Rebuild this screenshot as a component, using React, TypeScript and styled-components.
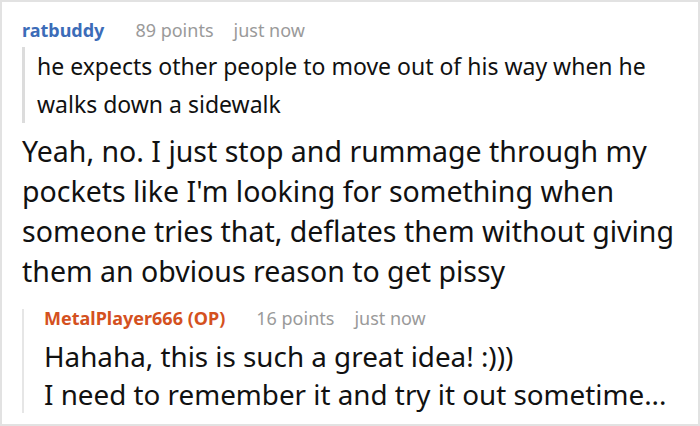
import React from 'react';
import styled, { createGlobalStyle } from 'styled-components';

const GlobalStyle = createGlobalStyle`
  html, body {
    margin: 0;
    padding: 0;
    background: #fff;
  }
  body {
    font-family: "Noto Sans", "Open Sans", sans-serif;
    color: #111;
  }
`;

const Frame = styled.div`
  box-sizing: border-box;
  width: 700px;
  height: 426px;
  border: 2px solid #e2e2e2;
  padding: 15px 20px 0 20px;
  overflow: hidden;
`;

const MetaRow = styled.div<{ $nested?: boolean }>`
  display: flex;
  align-items: baseline;
  font-size: 18px;
  line-height: ${p => (p.$nested ? '18px' : '26px')};
  margin-top: ${p => (p.$nested ? '-8px' : '0')};
`;

const Author = styled.span<{ $op?: boolean }>`
  font-weight: 700;
  color: ${p => (p.$op ? '#d4511e' : '#3c6cb8')};
  margin-right: 31px;
`;

const Points = styled.span`
  color: #9a9a9a;
  margin-right: 20px;
`;

const Time = styled.span`
  color: #9a9a9a;
`;

const Quote = styled.blockquote`
  margin: 4px 0 0 0;
  padding: 0 0 0 12px;
  border-left: 3px solid #dcdcdc;
  font-size: 23px;
  line-height: 38px;
`;

const Body = styled.p`
  margin: 8px 0 0 0;
  font-size: 28.5px;
  line-height: 40px;
`;

const Reply = styled.div`
  margin-top: 26px;
  border-left: 2px solid #e6e6e6;
  padding-left: 20px;
`;

const ReplyText = styled.p`
  margin: 10px 0 -4px 0;
  font-size: 27.8px;
  line-height: 38px;
`;

const App: React.FC = () => {
  return (
    <>
      <GlobalStyle />
      <Frame>
        <MetaRow>
          <Author>ratbuddy</Author>
          <Points>89 points</Points>
          <Time>just now</Time>
        </MetaRow>
        <Quote>
          he expects other people to move out of his way when he walks down a sidewalk
        </Quote>
        <Body>
          Yeah, no. I just stop and rummage through my pockets like I'm looking for something when
          someone tries that, deflates them without giving them an obvious reason to get pissy
        </Body>
        <Reply>
          <MetaRow $nested>
            <Author $op>MetalPlayer666 (OP)</Author>
            <Points>16 points</Points>
            <Time>just now</Time>
          </MetaRow>
          <ReplyText>
            Hahaha, this is such a great idea! :)))
            <br />
            I need to remember it and try it out sometime...
          </ReplyText>
        </Reply>
      </Frame>
    </>
  );
};

export default App;
